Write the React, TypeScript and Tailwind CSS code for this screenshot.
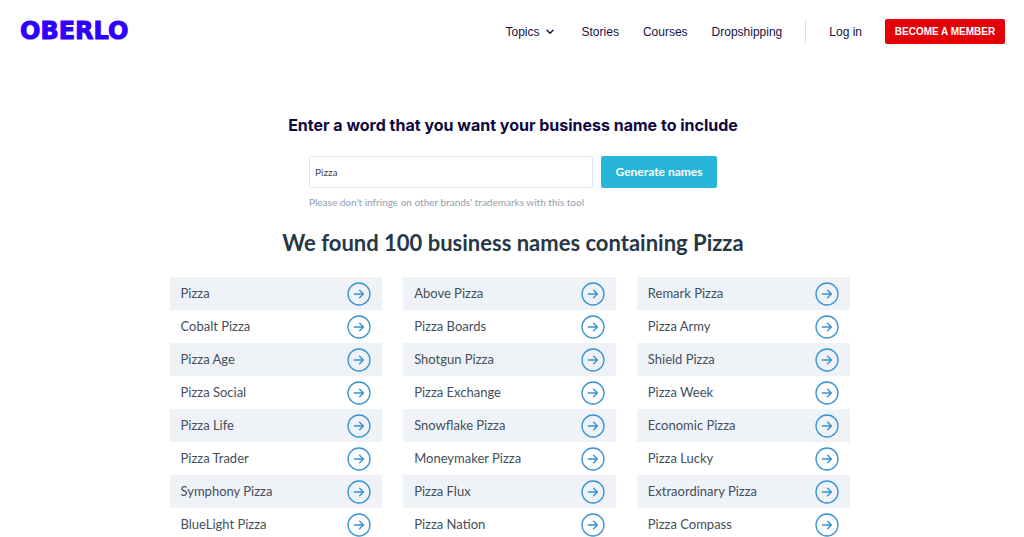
const topics = ["Stories", "Courses", "Dropshipping"];

const columns = [
  [
    "Pizza",
    "Cobalt Pizza",
    "Pizza Age",
    "Pizza Social",
    "Pizza Life",
    "Pizza Trader",
    "Symphony Pizza",
    "BlueLight Pizza",
  ],
  [
    "Above Pizza",
    "Pizza Boards",
    "Shotgun Pizza",
    "Pizza Exchange",
    "Snowflake Pizza",
    "Moneymaker Pizza",
    "Pizza Flux",
    "Pizza Nation",
  ],
  [
    "Remark Pizza",
    "Pizza Army",
    "Shield Pizza",
    "Pizza Week",
    "Economic Pizza",
    "Pizza Lucky",
    "Extraordinary Pizza",
    "Pizza Compass",
  ],
];

function ArrowCircle() {
  return (
    <svg className="size-6" viewBox="0 0 24 24" fill="none" stroke="currentColor" aria-hidden="true">
      <circle cx="12" cy="12" r="11" strokeWidth="1.3" />
      <path
        d="M7.3 12h9M12.6 8.2l3.8 3.8-3.8 3.8"
        strokeWidth="1.4"
        strokeLinecap="round"
        strokeLinejoin="round"
      />
    </svg>
  );
}

function Header() {
  return (
    <header className="flex h-[62px] items-center justify-between pl-5 pr-[19px]">
      <a
        href="#"
        className="font-['DejaVu_Sans',sans-serif] text-[24px] font-bold leading-6 text-[#2f00ff] [-webkit-text-stroke:1px_#2f00ff]"
      >
        OBERLO
      </a>

      <nav className="flex items-center pt-px text-xs text-[#16123f]">
        <button type="button" className="mr-7 flex items-center gap-1.5">
          Topics
          <svg className="w-2" viewBox="0 0 8 6" fill="none" stroke="currentColor" aria-hidden="true">
            <path d="M1 1.3l3 3 3-3" strokeWidth="1.4" strokeLinecap="round" strokeLinejoin="round" />
          </svg>
        </button>
        <div className="flex gap-6">
          {topics.map((topic) => (
            <a key={topic} href="#">
              {topic}
            </a>
          ))}
        </div>
        <div className="mx-[23px] h-[23px] w-px bg-[#dcdfe8]" />
        <a href="#">Log in</a>
        <a
          href="#"
          className="ml-[23px] flex h-[25px] w-[120px] items-center justify-center rounded-xs bg-[#e30006] text-[10px] font-bold text-white"
        >
          BECOME A MEMBER
        </a>
      </nav>
    </header>
  );
}

function SearchForm() {
  return (
    <form className="mx-auto w-[408px] max-w-full font-['Lato',sans-serif]" onSubmit={(e) => e.preventDefault()}>
      <div className="flex h-8 gap-2">
        <input
          id="word"
          type="text"
          defaultValue="Pizza"
          aria-describedby="word-hint"
          className="min-w-0 flex-1 rounded-xs border border-[#dde4ed] px-[5px] text-[10px] text-[#3b4754] outline-none"
        />
        <button
          type="submit"
          className="w-[116px] rounded-xs bg-[#27b6d9] text-[12px] font-bold text-white"
        >
          Generate names
        </button>
      </div>
      <p id="word-hint" className="mt-2 text-[10px] leading-3 text-[#919eab]">
        Please don&apos;t infringe on other brands&apos; trademarks with this tool
      </p>
    </form>
  );
}

function NameList({ names }: { names: string[] }) {
  return (
    <ul>
      {names.map((name) => (
        <li key={name} className="odd:bg-[#eff3f7]">
          <a href="#" className="flex h-[33px] items-center justify-between px-[11px]">
            <span>{name}</span>
            <span className="text-[#3793d5]">
              <ArrowCircle />
            </span>
          </a>
        </li>
      ))}
    </ul>
  );
}

export default function App() {
  return (
    <div className="bg-white font-['Liberation_Sans',sans-serif]">
      <Header />

      <main className="pl-[2px] pt-[53px]">
        <label
          htmlFor="word"
          className="block text-center font-['Inter',sans-serif] text-[16px] font-bold leading-5 text-[#0f0740]"
        >
          Enter a word that you want your business name to include
        </label>

        <div className="mt-[21px]">
          <SearchForm />
        </div>

        <h1 className="mt-[21px] text-center font-['Lato',sans-serif] text-[22px] font-bold leading-7 text-[#263746]">
          We found 100 business names containing Pizza
        </h1>

        <div className="pr-[7px]">
          <div className="mx-auto mt-5 grid max-w-[680px] grid-cols-3 gap-[21px] font-['Lato',sans-serif] text-[13px] text-[#434f5b]">
            {columns.map((names) => (
              <NameList key={names[0]} names={names} />
            ))}
          </div>
        </div>
      </main>
    </div>
  );
}
